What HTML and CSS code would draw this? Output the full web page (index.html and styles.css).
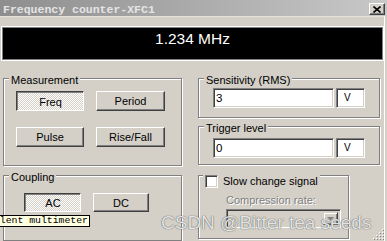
FILE: index.html
```html
<!DOCTYPE html>
<html>
<head>
<meta charset="utf-8">
<link rel="stylesheet" href="styles.css">
</head>
<body>
<div class="window">
  <div class="titlebar">
    <span class="title">Frequency counter-XFC1</span>
    <span class="close"><svg width="8" height="7" viewBox="0 0 8 7"><path d="M0.5 0.5 L7.5 6.5 M7.5 0.5 L0.5 6.5" stroke="#000" stroke-width="1.6" fill="none"/></svg></span>
  </div>
  <div class="body">
    <div class="display"><div class="screen">1.234 MHz</div></div>
    <div class="main">
      <div class="col col-left">
        <div class="group measure">
          <span class="legend">Measurement</span>
          <div class="btn-grid">
            <button class="btn on">Freq</button>
            <button class="btn">Period</button>
            <button class="btn">Pulse</button>
            <button class="btn">Rise/Fall</button>
          </div>
        </div>
        <div class="group coupling">
          <span class="legend">Coupling</span>
          <div class="btn-row">
            <button class="btn on ac">AC</button>
            <button class="btn dc">DC</button>
          </div>
        </div>
      </div>
      <div class="col col-right">
        <div class="group sens">
          <span class="legend">Sensitivity (RMS)</span>
          <div class="field-row">
            <div class="field">3</div>
            <div class="field unit">V</div>
          </div>
        </div>
        <div class="group trig">
          <span class="legend">Trigger level</span>
          <div class="field-row">
            <div class="field">0</div>
            <div class="field unit">V</div>
          </div>
        </div>
        <div class="group slow">
          <span class="legend check-legend"><span class="chk"></span><span>Slow change signal</span></span>
          <div class="disabled-label">Compression rate:</div>
          <div class="combo"><span class="arrow"><svg width="7" height="4" viewBox="0 0 7 4"><path d="M0 0 H7 L3.5 3.5 Z" fill="#808080"/></svg></span></div>
        </div>
      </div>
    </div>
  </div>
  <div class="tooltip"><span>lent multimeter</span></div>
  <div class="watermark">CSDN @Bitter tea seeds</div>
  <svg class="grip" width="12" height="12" viewBox="0 0 12 12">
    <g fill="#fff"><rect x="9" y="1" width="1" height="1"/><rect x="6" y="4" width="1" height="1"/><rect x="9" y="4" width="1" height="1"/><rect x="3" y="7" width="1" height="1"/><rect x="6" y="7" width="1" height="1"/><rect x="9" y="7" width="1" height="1"/><rect x="0" y="10" width="1" height="1"/><rect x="3" y="10" width="1" height="1"/><rect x="6" y="10" width="1" height="1"/><rect x="9" y="10" width="1" height="1"/></g>
    <g fill="#808080"><rect x="10" y="2" width="1" height="1"/><rect x="7" y="5" width="1" height="1"/><rect x="10" y="5" width="1" height="1"/><rect x="4" y="8" width="1" height="1"/><rect x="7" y="8" width="1" height="1"/><rect x="10" y="8" width="1" height="1"/><rect x="1" y="11" width="1" height="1"/><rect x="4" y="11" width="1" height="1"/><rect x="7" y="11" width="1" height="1"/><rect x="10" y="11" width="1" height="1"/></g>
  </svg>
</div>
</body>
</html>
```
FILE: styles.css
```css
html, body {
  margin: 0;
  padding: 0;
}
body {
  width: 387px;
  height: 241px;
  overflow: hidden;
  background: #d4d0c8;
  font-family: "Liberation Sans", Arial, sans-serif;
  font-size: 11px;
  color: #000;
}
.window {
  position: relative;
  width: 387px;
  height: 241px;
}
.titlebar {
  height: 16px;
  background: linear-gradient(to right, #8e8e8e, #c8c8c8);
  display: flex;
  justify-content: space-between;
}
.title {
  font-family: "Liberation Mono", monospace;
  font-weight: bold;
  font-size: 11.5px;
  line-height: 13px;
  color: #e4e4e4;
  padding: 3px 0 0 3px;
  white-space: pre;
}
.close {
  box-sizing: border-box;
  width: 16px;
  height: 12px;
  margin: 3px 2px 0 0;
  background: #d4d0c8;
  border: 1px solid;
  border-color: #fff #404040 #404040 #fff;
  box-shadow: inset -1px -1px 0 #808080;
  display: flex;
  align-items: center;
  justify-content: center;
}
.body {
  box-sizing: border-box;
  width: 385px;
  height: 225px;
  border-top: 1px solid #e6e3dd;
  border-right: 1px solid #fff;
}
.display {
  box-sizing: border-box;
  margin: 9px 0 0 1px;
  width: 383px;
  height: 35px;
  border: 1px solid #fff;
}
.screen {
  box-sizing: border-box;
  height: 100%;
  border: 1px solid #808080;
  background: #000;
  color: #fff;
  font-size: 15.5px;
  line-height: 1;
  text-align: center;
  padding-top: 3px;
}
.main {
  display: flex;
  gap: 16px;
  margin: 17px 0 0 3px;
}
.col {
  display: flex;
  flex-direction: column;
}
.col-left { width: 179px; }
.col-right { width: 182px; }
.group {
  position: relative;
  box-sizing: border-box;
  border: 1px solid #808080;
  box-shadow: inset 1px 1px 0 #fff, 1px 1px 0 #fff;
}
.legend {
  position: absolute;
  top: -4px;
  left: 5px;
  padding: 0 2px;
  background: #d4d0c8;
  line-height: 11px;
  white-space: nowrap;
}
.measure { height: 88px; }
.coupling { height: 66px; margin-top: 9px; }
.sens { height: 40px; }
.trig { height: 39px; margin-top: 8px; }
.slow { height: 64px; width: 151px; margin-top: 10px; }

.btn-grid {
  display: grid;
  grid-template-columns: 68px 69px;
  grid-template-rows: 20px 20px;
  column-gap: 12px;
  row-gap: 16px;
  padding: 12px 0 0 12px;
}
.btn {
  box-sizing: border-box;
  margin: 0;
  padding: 0;
  background: #d4d0c8;
  border: 1px solid;
  border-color: #fff #404040 #404040 #fff;
  box-shadow: inset -1px -1px 0 #808080;
  font-family: "Liberation Sans", Arial, sans-serif;
  font-size: 11px;
  color: #000;
  display: flex;
  align-items: center;
  justify-content: center;
  border-radius: 0;
}
.btn.on {
  border-color: #404040 #fff #fff #404040;
  box-shadow: inset 1px 1px 0 #808080;
  background: repeating-conic-gradient(#fff 0 25%, #d4d0c8 0 50%) 0 0 / 2px 2px;
  padding: 1px 0 0 1px;
}
.btn-row {
  display: flex;
  gap: 12px;
  padding: 17px 0 0 20px;
}
.ac { width: 57px; height: 19px; }
.dc { width: 56px; height: 19px; }

.field-row {
  display: flex;
  gap: 2px;
  padding: 9px 0 0 14px;
}
.trig .field-row { padding-top: 11px; }
.field {
  box-sizing: border-box;
  width: 121px;
  height: 20px;
  background: #fff;
  border: 1px solid;
  border-color: #808080 #fff #fff #808080;
  box-shadow: inset 1px 1px 0 #404040, inset -1px -1px 0 #d4d0c8;
  padding: 0 2px;
  line-height: 18px;
  font-size: 11.5px;
}
.field.unit {
  width: 29px;
  padding-left: 7px;
  font-size: 10px;
}
.check-legend {
  top: -1px;
  left: 4px;
  display: flex;
  align-items: center;
  gap: 5px;
  line-height: 13px;
}
.chk {
  box-sizing: border-box;
  width: 13px;
  height: 13px;
  background: #fff;
  border: 1px solid;
  border-color: #808080 #fff #fff #808080;
  box-shadow: inset 1px 1px 0 #404040, inset -1px -1px 0 #d4d0c8;
}
.disabled-label {
  color: #808080;
  text-shadow: 1px 1px 0 #fff;
  padding: 19px 0 0 27px;
  line-height: 11px;
}
.combo {
  box-sizing: border-box;
  width: 115px;
  height: 19px;
  margin: 3px 0 0 27px;
  border: 1px solid;
  border-color: #808080 #fff #fff #808080;
  box-shadow: inset 1px 1px 0 #404040, inset -1px -1px 0 #d4d0c8;
  display: flex;
  justify-content: flex-end;
  padding: 2px;
}
.combo .arrow {
  box-sizing: border-box;
  width: 15px;
  height: 13px;
  border: 1px solid;
  border-color: #d4d0c8 #404040 #404040 #d4d0c8;
  box-shadow: inset 1px 1px 0 #fff, inset -1px -1px 0 #808080;
  display: flex;
  align-items: center;
  justify-content: center;
}
.tooltip {
  position: absolute;
  left: -1px;
  top: 215px;
  box-sizing: border-box;
  width: 91px;
  height: 12px;
  border: 1px solid #000;
  background: #ffffe1;
  font-family: "Liberation Mono", monospace;
  font-size: 9.8px;
  line-height: 10px;
  display: flex;
  justify-content: flex-end;
  padding-right: 1px;
  white-space: nowrap;
  overflow: hidden;
}
.watermark {
  position: absolute;
  left: 161px;
  top: 213px;
  font-family: "Liberation Sans", Arial, sans-serif;
  font-size: 19px;
  line-height: 1;
  color: rgba(255, 255, 255, 0.85);
  text-shadow: 0 0 1px rgba(70, 70, 70, 0.9), 0 0 1px rgba(70, 70, 70, 0.6);
  white-space: nowrap;
}
.grip {
  position: absolute;
  right: 2px;
  bottom: 1px;
}
```
